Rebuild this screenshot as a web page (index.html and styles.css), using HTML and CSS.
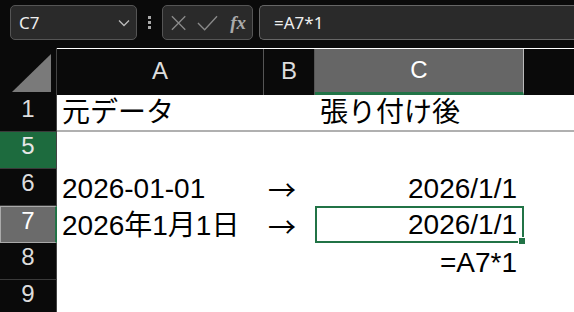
FILE: index.html
```html
<!DOCTYPE html>
<html lang="ja">
<head>
  <meta charset="UTF-8">
  <title>Excel - 日付の貼り付け</title>
  <link rel="stylesheet" href="styles.css">
</head>
<body>

  <div class="toolbar">
    <div class="namebox">
      <span>C7</span>
      <svg class="chevron" width="12" height="8" viewBox="0 0 12 8"><path d="M1 1.5 L6 6.5 L11 1.5" fill="none" stroke="#bbb" stroke-width="1.3"/></svg>
    </div>
    <div class="dots"><i></i><i></i><i></i></div>
    <div class="fxbox">
      <svg width="18" height="18" viewBox="0 0 18 18"><path d="M2 2 L16 16 M16 2 L2 16" stroke="#8a8a8a" stroke-width="1.4"/></svg>
      <svg width="22" height="18" viewBox="0 0 22 18"><path d="M1 9 L8 16 L21 2" fill="none" stroke="#8a8a8a" stroke-width="1.4"/></svg>
      <span class="fx">fx</span>
    </div>
    <div class="formula">=A7*1</div>
  </div>

  <div class="sheet">
    <!-- header row -->
    <div class="corner">
      <svg width="40" height="38" viewBox="0 0 40 38"><path d="M0 38 L39 38 L39 0 Z" fill="#7a7a7a"/></svg>
    </div>
    <div class="colhead">A</div>
    <div class="colhead">B</div>
    <div class="colhead active">C</div>
    <div class="colhead last"></div>

    <!-- row 1 -->
    <div class="rowhead">1</div>
    <div class="cell split">元データ</div>
    <div class="cell split"></div>
    <div class="cell split">張り付け後</div>
    <div class="cell split"></div>

    <!-- row 5 -->
    <div class="rowhead hidden-mark">5</div>
    <div class="cell"></div>
    <div class="cell"></div>
    <div class="cell"></div>
    <div class="cell"></div>

    <!-- row 6 -->
    <div class="rowhead">6</div>
    <div class="cell">2026-01-01</div>
    <div class="cell arrow">→</div>
    <div class="cell num">2026/1/1</div>
    <div class="cell"></div>

    <!-- row 7 -->
    <div class="rowhead active">7</div>
    <div class="cell">2026年1月1日</div>
    <div class="cell arrow">→</div>
    <div class="cell num selected">2026/1/1<span class="handle"></span></div>
    <div class="cell"></div>

    <!-- row 8 -->
    <div class="rowhead">8</div>
    <div class="cell"></div>
    <div class="cell"></div>
    <div class="cell num">=A7*1</div>
    <div class="cell"></div>

    <!-- row 9 -->
    <div class="rowhead">9</div>
    <div class="cell"></div>
    <div class="cell"></div>
    <div class="cell"></div>
    <div class="cell"></div>
  </div>

</body>
</html>
```

FILE: styles.css
```css
body {
  margin: 0;
  background: #0a0a0a;
  font-family: "Liberation Sans", "Noto Sans CJK JP", sans-serif;
  overflow: hidden;
}

/* formula bar */
.toolbar {
  display: flex;
  align-items: center;
  height: 48px;
  padding: 0 0 0 10px;
  box-sizing: border-box;
}

.namebox {
  display: flex;
  align-items: center;
  justify-content: space-between;
  width: 127px;
  height: 35px;
  box-sizing: border-box;
  margin-top: -3px;
  padding: 0 6px 0 8px;
  background: #2a2a2a;
  border: 1px solid #555;
  border-radius: 5px;
  color: #eee;
  font-family: "Noto Sans", sans-serif;
  font-size: 17px;
}

.dots {
  display: flex;
  flex-direction: column;
  gap: 2px;
  width: 25px;
  align-items: center;
  margin-top: -3px;
}

.dots i {
  display: block;
  width: 3px;
  height: 3px;
  background: #aaa;
}

.fxbox {
  display: flex;
  align-items: center;
  gap: 10px;
  width: 91px;
  height: 35px;
  box-sizing: border-box;
  margin-top: -3px;
  padding: 0 6px 0 7px;
  background: #2a2a2a;
  border: 1px solid #555;
  border-radius: 5px;
}

.fx {
  font-family: "Liberation Serif", serif;
  font-style: italic;
  font-weight: bold;
  font-size: 19px;
  color: #aaa;
  margin-left: 2px;
}

.formula {
  flex: 1;
  height: 35px;
  box-sizing: border-box;
  margin: -3px 0 0 6px;
  padding: 0 0 0 14px;
  line-height: 33px;
  background: #2a2a2a;
  border: 1px solid #666;
  border-right: none;
  border-radius: 5px 0 0 5px;
  color: #eee;
  font-family: "Noto Sans", sans-serif;
  font-size: 17px;
}

/* grid */
.sheet {
  display: grid;
  grid-template-columns: 57px 207px 51px 209px 1fr;
  grid-template-rows: 47px repeat(6, 37px);
  background: #fff;
}

.corner,
.colhead {
  background: #0a0a0a;
  color: #ddd;
  font-size: 24px;
  display: flex;
  align-items: center;
  justify-content: center;
  padding-bottom: 2px;
  box-sizing: border-box;
}

.corner {
  align-items: flex-end;
  justify-content: flex-end;
  padding: 0 4px 3px 0;
  border-right: 1px solid #444;
}

.colhead {
  border-right: 1px solid #555;
  margin-top: 1px;
}

.colhead.active {
  background: #666;
  color: #fff;
  border-right: 1px solid #bbb;
  border-bottom: 3px solid #217346;
}

.colhead.last {
  border-right: none;
}

.rowhead {
  background: #0a0a0a;
  color: #ddd;
  font-size: 24px;
  display: flex;
  align-items: center;
  justify-content: center;
  padding-bottom: 8px;
  box-sizing: border-box;
  border-right: 1px solid #444;
  border-bottom: 1px solid #3a3a3a;
}

.rowhead.hidden-mark {
  background: #1d6b3e;
  color: #e6e6e6;
}

.rowhead.active {
  background: #6b6b6b;
  color: #fff;
  border: 1px solid #aaa;
  border-right: 2px solid #217346;
}

.cell {
  position: relative;
  display: flex;
  align-items: flex-end;
  padding: 0 7px 1px 5px;
  line-height: 32px;
  font-size: 28px;
  color: #000;
  white-space: nowrap;
  box-sizing: border-box;
}

.cell.arrow {
  font-family: "Noto Sans CJK JP", sans-serif;
  padding-left: 4px;
}

.cell.split {
  border-bottom: 2px solid #b0b0b0;
}

.cell.num {
  justify-content: flex-end;
}

.cell.selected {
  border: 2px solid #217346;
  padding: 0 5px 0 3px;
}

.handle {
  position: absolute;
  right: -4px;
  bottom: -4px;
  width: 6px;
  height: 6px;
  background: #217346;
  border: 1px solid #fff;
}
```
